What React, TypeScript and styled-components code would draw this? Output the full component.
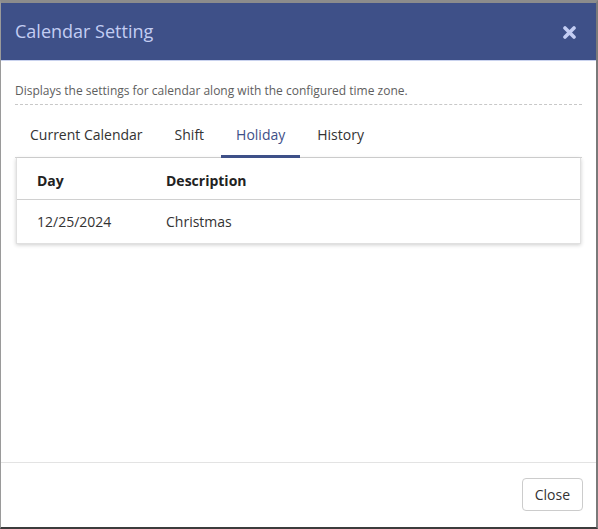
import styled, { createGlobalStyle } from 'styled-components'

const GlobalStyle = createGlobalStyle`
    html, body {
        margin: 0;
        padding: 0;
        background: #ffffff;
    }
    * {
        box-sizing: border-box;
    }
`

const tabs = ['Current Calendar', 'Shift', 'Holiday', 'History']

const holidays = [{ day: '12/25/2024', description: 'Christmas' }]

export default function App() {
    return (
        <>
            <GlobalStyle />
            <Frame>
                <Header>
                    <Title>Calendar Setting</Title>
                    <CloseIcon aria-label='Close'>
                        <svg width='13' height='13' viewBox='0 0 13 13'>
                            <path d='M2 2 L11 11 M11 2 L2 11' stroke='#c3cdf3' strokeWidth='3.6' strokeLinecap='round' />
                        </svg>
                    </CloseIcon>
                </Header>
                <Body>
                    <Description>Displays the settings for calendar along with the configured time zone.</Description>
                    <TabBar>
                        {tabs.map((tab) => (
                            <Tab key={tab} $active={tab === 'Holiday'}>{tab}</Tab>
                        ))}
                    </TabBar>
                    <TableCard>
                        <Table>
                            <thead>
                                <tr>
                                    <HeadCell $width='129px'>Day</HeadCell>
                                    <HeadCell>Description</HeadCell>
                                </tr>
                            </thead>
                            <tbody>
                                {holidays.map((h) => (
                                    <tr key={h.day}>
                                        <Cell>{h.day}</Cell>
                                        <Cell>{h.description}</Cell>
                                    </tr>
                                ))}
                            </tbody>
                        </Table>
                    </TableCard>
                </Body>
                <Footer>
                    <Button>Close</Button>
                </Footer>
            </Frame>
        </>
    )
}

const Frame = styled.div`
    display: flex;
    flex-direction: column;
    width: 598px;
    height: 529px;
    border-top: 3px solid #8c8c8c;
    border-left: 1px solid #9a9a9a;
    border-right: 2px solid #7a7a7a;
    border-bottom: 2px solid #3c3c3c;
    font-family: 'Open Sans', 'Noto Sans', sans-serif;
    background: #ffffff;
`

const Header = styled.header`
    display: flex;
    align-items: center;
    justify-content: space-between;
    height: 58px;
    padding: 0 14px 2px 14px;
    background: #3e5088;
    border-bottom: 1px solid #c9d2ee;
`

const Title = styled.h1`
    margin: 0;
    font-size: 18px;
    font-weight: 400;
    color: #c3cdf3;
`

const CloseIcon = styled.span`
    display: flex;
    align-items: center;
    margin-right: 6px;
    margin-top: 3px;
`

const Body = styled.main`
    flex: 1;
    padding: 21px 14px 0 14px;
`

const Description = styled.p`
    margin: 0;
    padding-bottom: 4px;
    font-size: 12px;
    line-height: 18px;
    color: #5e5e5e;
    border-bottom: 1px dashed #c8c8c8;
`

const TabBar = styled.nav`
    display: flex;
    gap: 2px;
    margin-top: 16px;
    border-bottom: 1px solid #d6d6d6;
`

const Tab = styled.div<{ $active?: boolean }>`
    padding: 0 15px;
    height: 37px;
    line-height: 28px;
    font-size: 14px;
    color: ${(p) => (p.$active ? '#3e5088' : '#333333')};
    border-bottom: 3px solid ${(p) => (p.$active ? '#3e5088' : 'transparent')};
    margin-bottom: -1px;
`

const TableCard = styled.div`
    margin: 0 1px;
    border: 1px solid #e0e0e0;
    border-top: none;
    box-shadow: 0 1px 4px rgba(0, 0, 0, 0.2);
`

const Table = styled.table`
    width: 100%;
    border-collapse: collapse;
    font-size: 14px;
    color: #333333;
`

const HeadCell = styled.th<{ $width?: string }>`
    width: ${(p) => p.$width || 'auto'};
    height: 41px;
    padding: 5px 20px 0 20px;
    text-align: left;
    font-weight: 700;
    color: #222222;
    border-bottom: 1px solid #d0d0d0;
`

const Cell = styled.td`
    height: 44px;
    padding: 0 20px;
    color: #333333;
`

const Footer = styled.footer`
    display: flex;
    justify-content: flex-end;
    padding: 15px 13px 16px 14px;
    border-top: 1px solid #e3e3e3;
`

const Button = styled.button`
    height: 33px;
    padding: 0 12px;
    font-family: 'Open Sans', 'Noto Sans', sans-serif;
    font-size: 14px;
    color: #333333;
    background: #ffffff;
    border: 1px solid #cccccc;
    border-radius: 4px;
`
